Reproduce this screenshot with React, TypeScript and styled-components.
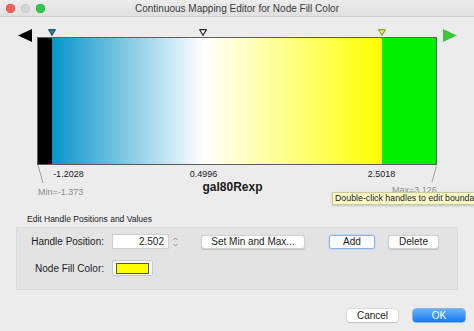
import React from "react";
import styled, { createGlobalStyle } from "styled-components";

const MIN = -1.373;
const MAX = 3.126;
const BAR_WIDTH = 400;

const toX = (v: number) => ((v - MIN) / (MAX - MIN)) * BAR_WIDTH;

const handles = [
  { value: -1.2028, label: "-1.2028", fill: "#1c86b4", stroke: "#2a5468", align: "start" },
  { value: 0.4996, label: "0.4996", fill: "#ffffff", stroke: "#222222", align: "center" },
  { value: 2.5018, label: "2.5018", fill: "#e8f53a", stroke: "#8fa23a", align: "center" }
];

const GlobalStyle = createGlobalStyle`
  html, body {
    margin: 0;
    padding: 0;
    background: #ececec;
    overflow: hidden;
  }
  body {
    font-family: "Liberation Sans", Arial, sans-serif;
  }
`;

const Window = styled.div`
  width: 474px;
  height: 331px;
  position: relative;
  background: #ececec;
  overflow: hidden;
  display: flex;
  flex-direction: column;
`;

const TitleBar = styled.div`
  height: 16px;
  border-bottom: 1px solid #cdcdcd;
  background: linear-gradient(#ececec, #e0e0e0);
  position: relative;
  display: flex;
  align-items: center;
  justify-content: center;
`;

const Lights = styled.div`
  position: absolute;
  left: 6px;
  top: 4px;
  display: flex;
  gap: 6px;
`;

const Light = styled.span<{ $color: string; $border: string }>`
  width: 9px;
  height: 9px;
  border-radius: 50%;
  background: ${p => p.$color};
  box-shadow: inset 0 0 0 0.5px ${p => p.$border};
`;

const Title = styled.div`
  font-size: 10px;
  color: #3a3a3a;
`;

const SliderRow = styled.div`
  display: flex;
  align-items: flex-start;
  padding-left: 18px;
  margin-top: 12px;
`;

const Arrow = styled.svg`
  display: block;
  flex: none;
`;

const Canvas = styled.div`
  width: ${BAR_WIDTH}px;
  height: 180px;
  position: relative;
  margin: 0 6px 0 5px;
  display: flex;
  flex-direction: column;
`;

const HandleStrip = styled.div`
  height: 8px;
  position: relative;
`;

const HandleIcon = styled.svg`
  position: absolute;
  top: 0;
  display: block;
`;

const Bar = styled.div<{ $stops: string }>`
  height: 128px;
  box-sizing: border-box;
  border: 1px solid #5e5e5e;
  background: ${p => p.$stops};
`;

const TickRow = styled.div`
  height: 15px;
  position: relative;
`;

const Tick = styled.span<{ $align: string }>`
  position: absolute;
  top: 4px;
  font-size: 9px;
  line-height: 10px;
  color: #1a1a1a;
  white-space: nowrap;
  transform: ${p => (p.$align === "center" ? "translateX(-50%)" : "none")};
`;

const AxisTitle = styled.div`
  font-size: 12px;
  line-height: 14px;
  font-weight: bold;
  color: #1a1a1a;
  text-align: center;
  padding-right: 9px;
`;

const Bound = styled.span`
  position: absolute;
  font-size: 9px;
  line-height: 10px;
  color: #8c8c8c;
  white-space: nowrap;
`;

const Leader = styled.svg`
  position: absolute;
  top: 136px;
  display: block;
`;

const Tooltip = styled.div`
  position: absolute;
  left: 332px;
  top: 192px;
  height: 13px;
  padding: 0 2px;
  box-sizing: border-box;
  background: #fcfcc9;
  border: 1px solid #c9c99a;
  box-shadow: 0 1px 2px rgba(0, 0, 0, 0.18);
  font-size: 8.8px;
  line-height: 11px;
  color: #222;
  white-space: nowrap;
`;

const SectionLabel = styled.div`
  margin-top: 5px;
  padding-left: 27px;
  font-size: 8.5px;
  line-height: 11px;
  color: #222;
`;

const Panel = styled.div`
  margin: 2px 16px 0;
  height: 63px;
  box-sizing: border-box;
  padding-top: 6px;
  background: #e3e3e3;
  border: 1px solid #dadada;
  border-radius: 2px;
  display: flex;
  flex-direction: column;
  gap: 11px;
`;

const FieldRow = styled.div`
  display: flex;
  align-items: center;
`;

const FieldLabel = styled.label`
  width: 87px;
  margin-right: 8px;
  text-align: right;
  font-size: 10px;
  color: #1e1e1e;
  white-space: nowrap;
`;

const NumberInput = styled.div`
  width: 57px;
  height: 15px;
  box-sizing: border-box;
  background: #fff;
  border: 1px solid #d0d0d0;
  font-size: 10px;
  line-height: 13px;
  text-align: right;
  padding-right: 4px;
  color: #222;
`;

const Spinner = styled.svg`
  display: block;
  margin-left: 3px;
`;

const Button = styled.div<{ $width: number; $gap: number; $focused?: boolean }>`
  width: ${p => p.$width}px;
  margin-left: ${p => p.$gap}px;
  height: 14px;
  box-sizing: border-box;
  background: #fff;
  border-radius: 3px;
  border: 1px solid ${p => (p.$focused ? "#8eb2e0" : "#d2d2d2")};
  box-shadow: ${p => (p.$focused ? "0 0 0 1px #c4d8f2" : "0 0.5px 1px rgba(0,0,0,0.15)")};
  font-size: 10px;
  line-height: 12px;
  text-align: center;
  color: #222;
  white-space: nowrap;
`;

const Swatch = styled.div`
  width: 41px;
  height: 16px;
  box-sizing: border-box;
  background: #f6f6f6;
  border: 1px solid #c8c8c8;
  border-radius: 2px;
  display: flex;
  align-items: center;
  justify-content: center;
`;

const SwatchFill = styled.div<{ $color: string }>`
  width: 31px;
  height: 9px;
  background: ${p => p.$color};
  border: 1px solid #555;
`;

const Footer = styled.div`
  margin-top: 19px;
  padding-right: 9px;
  display: flex;
  justify-content: flex-end;
  gap: 15px;
`;

const DialogButton = styled.div<{ $primary?: boolean; $width: number }>`
  width: ${p => p.$width}px;
  height: 13px;
  border-radius: 3px;
  font-size: 10px;
  line-height: 13px;
  text-align: center;
  color: ${p => (p.$primary ? "#fff" : "#222")};
  background: ${p => (p.$primary ? "linear-gradient(#68b1fb, #1279f0)" : "#fff")};
  box-shadow: ${p => (p.$primary ? "0 0 0 0.5px #2a78d8" : "0 0 0 0.5px #cfcfcf, 0 0.5px 1px rgba(0,0,0,0.2)")};
`;

const Handle = ({ x, fill, stroke }: { x: number; fill: string; stroke: string }) => (
  <HandleIcon width="8" height="7" viewBox="0 0 8 7" style={{ left: x - 4 }}>
    <polygon points="0.7,0.7 7.3,0.7 4,6.3" fill={fill} stroke={stroke} strokeWidth="1.2" strokeLinejoin="round" />
  </HandleIcon>
);

export default function App() {
  const x0 = toX(handles[0].value);
  const x1 = toX(handles[1].value);
  const x2 = toX(handles[2].value);
  const stops = `linear-gradient(to right, #000 0px, #000 ${x0 - 1}px, #0a95cb ${x0 - 1}px, #ffffff ${x1 - 1}px, #ffff00 ${x2 - 1}px, #00f000 ${x2 - 1}px, #00f000 100%)`;

  return (
    <Window>
      <GlobalStyle />
      <TitleBar>
        <Lights>
          <Light $color="#fc5f57" $border="#e0443e" />
          <Light $color="#d4d4d4" $border="#c4c4c4" />
          <Light $color="#30c748" $border="#1fa833" />
        </Lights>
        <Title>Continuous Mapping Editor for Node Fill Color</Title>
      </TitleBar>

      <SliderRow>
        <Arrow width="14" height="13" viewBox="0 0 14 13">
          <polygon points="14,0 14,13 0,6.5" fill="#000" />
        </Arrow>
        <Canvas>
          <HandleStrip>
            {handles.map(h => (
              <Handle key={h.label} x={toX(h.value)} fill={h.fill} stroke={h.stroke} />
            ))}
          </HandleStrip>
          <Bar $stops={stops} />
          <TickRow>
            {handles.map(h => (
              <Tick
                key={h.label}
                $align={h.align}
                style={{ left: h.align === "center" ? toX(h.value) : toX(h.value) + 1 }}
              >
                {h.label}
              </Tick>
            ))}
          </TickRow>
          <AxisTitle>gal80Rexp</AxisTitle>
          <Leader width="8" height="20" viewBox="0 0 8 20" style={{ left: 0 }}>
            <line x1="1" y1="0" x2="6" y2="18" stroke="#8a8a8a" strokeWidth="0.8" />
          </Leader>
          <Bound style={{ left: 1, top: 158 }}>Min=-1.373</Bound>
          <Leader width="8" height="20" viewBox="0 0 8 20" style={{ left: 392 }}>
            <line x1="7.5" y1="1" x2="3" y2="17" stroke="#8a8a8a" strokeWidth="0.8" />
          </Leader>
          <Bound style={{ left: 355, top: 156 }}>Max=3.126</Bound>
        </Canvas>
        <Arrow width="14" height="13" viewBox="0 0 14 13">
          <polygon points="0,0 0,13 14,6.5" fill="#3ec43e" />
        </Arrow>
      </SliderRow>

      <SectionLabel>Edit Handle Positions and Values</SectionLabel>
      <Panel>
        <FieldRow>
          <FieldLabel>Handle Position:</FieldLabel>
          <NumberInput>2.502</NumberInput>
          <Spinner width="7" height="14" viewBox="0 0 7 14">
            <polyline points="1.5,5 3.5,3 5.5,5" fill="none" stroke="#8a8a8a" strokeWidth="1" />
            <polyline points="1.5,9 3.5,11 5.5,9" fill="none" stroke="#8a8a8a" strokeWidth="1" />
          </Spinner>
          <Button $width={104} $gap={22}>Set Min and Max...</Button>
          <Button $width={46} $gap={24} $focused>Add</Button>
          <Button $width={51} $gap={13}>Delete</Button>
        </FieldRow>
        <FieldRow>
          <FieldLabel>Node Fill Color:</FieldLabel>
          <Swatch>
            <SwatchFill $color="#ffff00" />
          </Swatch>
        </FieldRow>
      </Panel>

      <Footer>
        <DialogButton $width={51}>Cancel</DialogButton>
        <DialogButton $width={52} $primary>OK</DialogButton>
      </Footer>

      <Tooltip>Double-click handles to edit boundary values</Tooltip>
    </Window>
  );
}
